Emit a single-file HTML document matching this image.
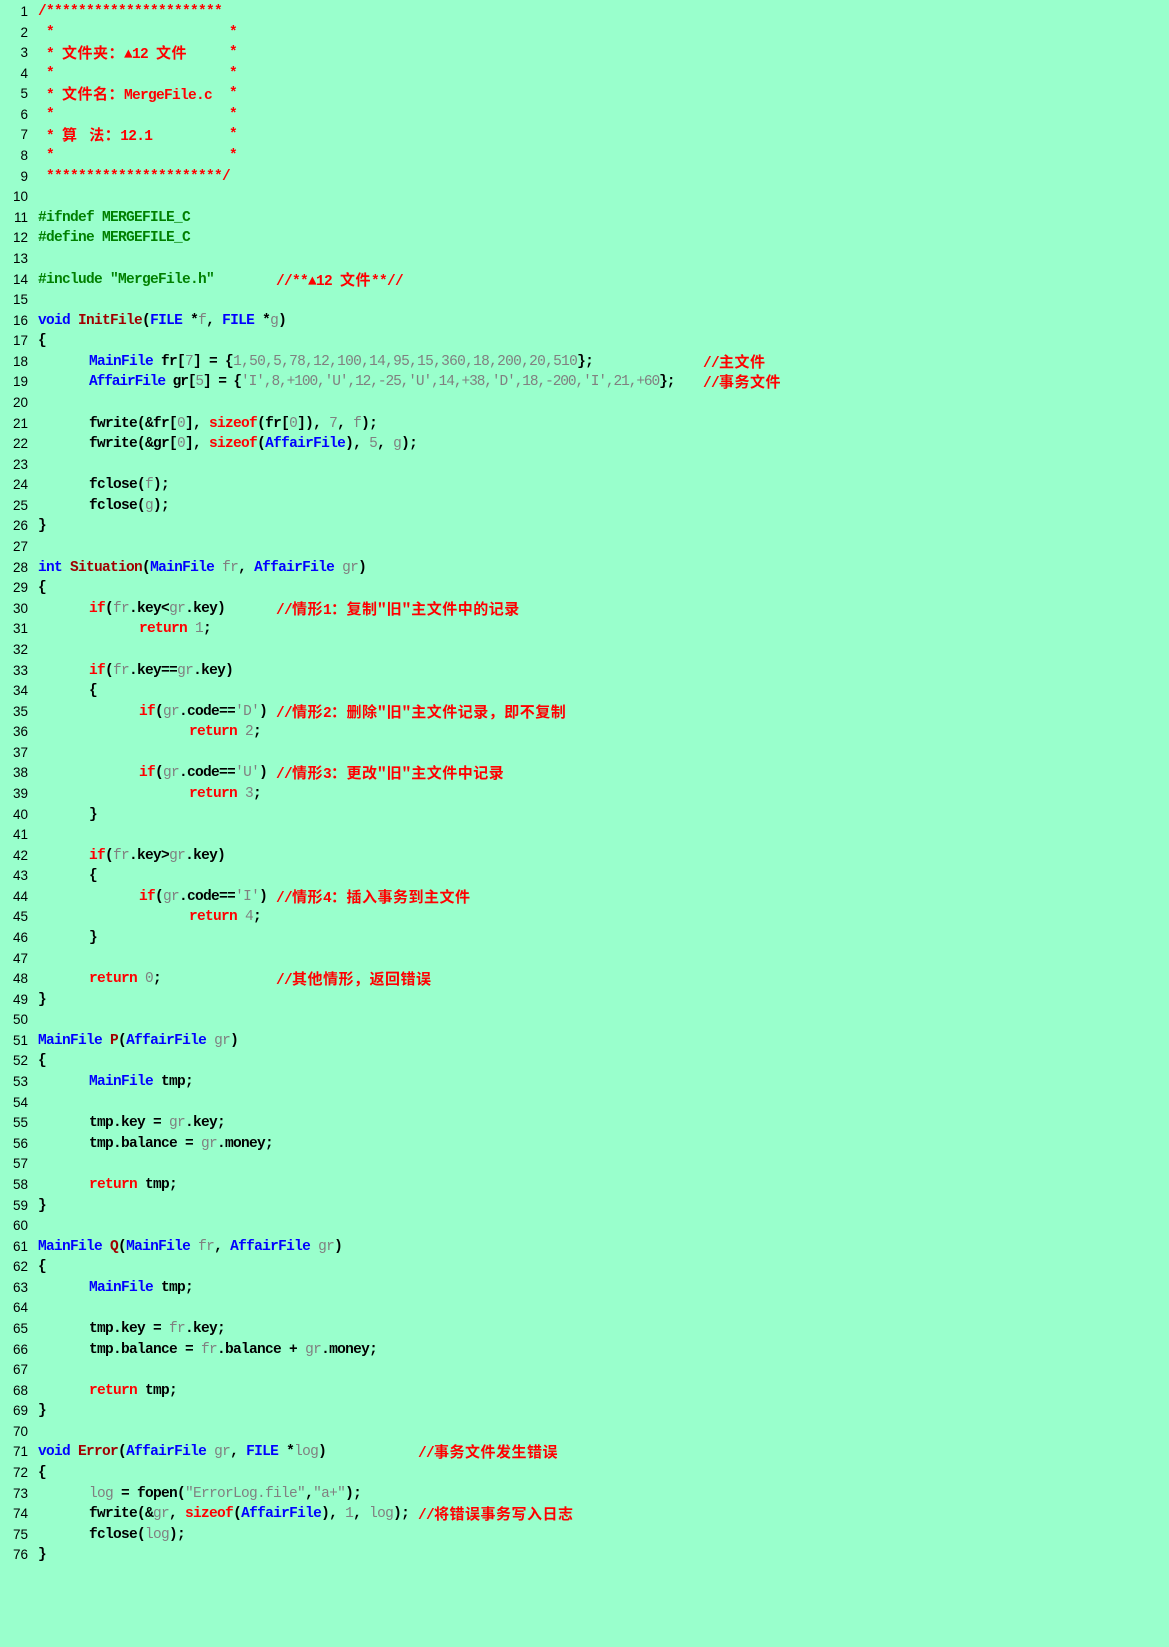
<!DOCTYPE html>
<html><head><meta charset="utf-8"><style>
html,body{margin:0;padding:0;background:#99ffcc;width:1169px;height:1647px;overflow:hidden}
#w{position:absolute;left:0;top:2px;width:1169px}
.l{position:relative;height:20.59px;line-height:20.59px;white-space:pre;font-family:"Liberation Mono","Noto Sans CJK SC",monospace;font-size:14.5px;letter-spacing:-0.7px;font-weight:bold;color:#000}
.n{position:absolute;left:0;width:28px;text-align:right;font-family:"Liberation Sans",sans-serif;font-weight:normal;font-size:13.5px;letter-spacing:0;color:#000}
.x{position:absolute;left:38px}
.i1{left:89px}.i2{left:139px}.i3{left:189px}
.c{position:absolute;color:#f00}
.r{color:#f00}.b{color:#0000ff}.f{color:#a00000}.g{color:#808080;font-weight:normal}.m{color:#008000}
.cj{font-family:"Noto Sans CJK SC",sans-serif;font-weight:bold;font-size:15px;letter-spacing:0.5px}
</style></head><body><div id="w">
<div class="l"><span class="n">1</span><span class="x r">/**********************</span></div>
<div class="l"><span class="n">2</span><span class="x r"> *</span><span class="c" style="left:229px">*</span></div>
<div class="l"><span class="n">3</span><span class="x r"> * <span class="cj">文件夹：</span>▲12 <span class="cj">文件</span></span><span class="c" style="left:229px">*</span></div>
<div class="l"><span class="n">4</span><span class="x r"> *</span><span class="c" style="left:229px">*</span></div>
<div class="l"><span class="n">5</span><span class="x r"> * <span class="cj">文件名：</span>MergeFile.c</span><span class="c" style="left:229px">*</span></div>
<div class="l"><span class="n">6</span><span class="x r"> *</span><span class="c" style="left:229px">*</span></div>
<div class="l"><span class="n">7</span><span class="x r"> * <span class="cj">算&nbsp;&nbsp;&nbsp;法：</span>12.1</span><span class="c" style="left:229px">*</span></div>
<div class="l"><span class="n">8</span><span class="x r"> *</span><span class="c" style="left:229px">*</span></div>
<div class="l"><span class="n">9</span><span class="x r"> **********************/</span></div>
<div class="l"><span class="n">10</span></div>
<div class="l"><span class="n">11</span><span class="x m">#ifndef MERGEFILE_C</span></div>
<div class="l"><span class="n">12</span><span class="x m">#define MERGEFILE_C</span></div>
<div class="l"><span class="n">13</span></div>
<div class="l"><span class="n">14</span><span class="x m">#include "MergeFile.h"</span><span class="c" style="left:276px">//**▲12 <span class="cj">文件</span>**//</span></div>
<div class="l"><span class="n">15</span></div>
<div class="l"><span class="n">16</span><span class="x"><span class="b">void</span> <span class="f">InitFile</span>(<span class="b">FILE</span> *<span class="g">f</span>, <span class="b">FILE</span> *<span class="g">g</span>)</span></div>
<div class="l"><span class="n">17</span><span class="x">{</span></div>
<div class="l"><span class="n">18</span><span class="x i1"><span class="b">MainFile</span> fr[<span class="g">7</span>] = {<span class="g">1,50,5,78,12,100,14,95,15,360,18,200,20,510</span>};</span><span class="c" style="left:703px">//<span class="cj">主文件</span></span></div>
<div class="l"><span class="n">19</span><span class="x i1" style="letter-spacing:-1.1px"><span class="b">AffairFile</span> gr[<span class="g">5</span>] = {<span class="g">'I',8,+100,'U',12,-25,'U',14,+38,'D',18,-200,'I',21,+60</span>};</span><span class="c" style="left:703px">//<span class="cj">事务文件</span></span></div>
<div class="l"><span class="n">20</span></div>
<div class="l"><span class="n">21</span><span class="x i1">fwrite(&amp;fr[<span class="g">0</span>], <span class="r">sizeof</span>(fr[<span class="g">0</span>]), <span class="g">7</span>, <span class="g">f</span>);</span></div>
<div class="l"><span class="n">22</span><span class="x i1">fwrite(&amp;gr[<span class="g">0</span>], <span class="r">sizeof</span>(<span class="b">AffairFile</span>), <span class="g">5</span>, <span class="g">g</span>);</span></div>
<div class="l"><span class="n">23</span></div>
<div class="l"><span class="n">24</span><span class="x i1">fclose(<span class="g">f</span>);</span></div>
<div class="l"><span class="n">25</span><span class="x i1">fclose(<span class="g">g</span>);</span></div>
<div class="l"><span class="n">26</span><span class="x">}</span></div>
<div class="l"><span class="n">27</span></div>
<div class="l"><span class="n">28</span><span class="x"><span class="b">int</span> <span class="f">Situation</span>(<span class="b">MainFile</span> <span class="g">fr</span>, <span class="b">AffairFile</span> <span class="g">gr</span>)</span></div>
<div class="l"><span class="n">29</span><span class="x">{</span></div>
<div class="l"><span class="n">30</span><span class="x i1"><span class="r">if</span>(<span class="g">fr</span>.key&lt;<span class="g">gr</span>.key)</span><span class="c" style="left:276px">//<span class="cj">情形</span>1<span class="cj">：复制"旧"主文件中的记录</span></span></div>
<div class="l"><span class="n">31</span><span class="x i2"><span class="r">return</span> <span class="g">1</span>;</span></div>
<div class="l"><span class="n">32</span></div>
<div class="l"><span class="n">33</span><span class="x i1"><span class="r">if</span>(<span class="g">fr</span>.key==<span class="g">gr</span>.key)</span></div>
<div class="l"><span class="n">34</span><span class="x i1">{</span></div>
<div class="l"><span class="n">35</span><span class="x i2"><span class="r">if</span>(<span class="g">gr</span>.code==<span class="g">'D'</span>)</span><span class="c" style="left:276px">//<span class="cj">情形</span>2<span class="cj">：删除"旧"主文件记录，即不复制</span></span></div>
<div class="l"><span class="n">36</span><span class="x i3"><span class="r">return</span> <span class="g">2</span>;</span></div>
<div class="l"><span class="n">37</span></div>
<div class="l"><span class="n">38</span><span class="x i2"><span class="r">if</span>(<span class="g">gr</span>.code==<span class="g">'U'</span>)</span><span class="c" style="left:276px">//<span class="cj">情形</span>3<span class="cj">：更改"旧"主文件中记录</span></span></div>
<div class="l"><span class="n">39</span><span class="x i3"><span class="r">return</span> <span class="g">3</span>;</span></div>
<div class="l"><span class="n">40</span><span class="x i1">}</span></div>
<div class="l"><span class="n">41</span></div>
<div class="l"><span class="n">42</span><span class="x i1"><span class="r">if</span>(<span class="g">fr</span>.key&gt;<span class="g">gr</span>.key)</span></div>
<div class="l"><span class="n">43</span><span class="x i1">{</span></div>
<div class="l"><span class="n">44</span><span class="x i2"><span class="r">if</span>(<span class="g">gr</span>.code==<span class="g">'I'</span>)</span><span class="c" style="left:276px">//<span class="cj">情形</span>4<span class="cj">：插入事务到主文件</span></span></div>
<div class="l"><span class="n">45</span><span class="x i3"><span class="r">return</span> <span class="g">4</span>;</span></div>
<div class="l"><span class="n">46</span><span class="x i1">}</span></div>
<div class="l"><span class="n">47</span></div>
<div class="l"><span class="n">48</span><span class="x i1"><span class="r">return</span> <span class="g">0</span>;</span><span class="c" style="left:276px">//<span class="cj">其他情形，返回错误</span></span></div>
<div class="l"><span class="n">49</span><span class="x">}</span></div>
<div class="l"><span class="n">50</span></div>
<div class="l"><span class="n">51</span><span class="x"><span class="b">MainFile</span> <span class="f">P</span>(<span class="b">AffairFile</span> <span class="g">gr</span>)</span></div>
<div class="l"><span class="n">52</span><span class="x">{</span></div>
<div class="l"><span class="n">53</span><span class="x i1"><span class="b">MainFile</span> tmp;</span></div>
<div class="l"><span class="n">54</span></div>
<div class="l"><span class="n">55</span><span class="x i1">tmp.key = <span class="g">gr</span>.key;</span></div>
<div class="l"><span class="n">56</span><span class="x i1">tmp.balance = <span class="g">gr</span>.money;</span></div>
<div class="l"><span class="n">57</span></div>
<div class="l"><span class="n">58</span><span class="x i1"><span class="r">return</span> tmp;</span></div>
<div class="l"><span class="n">59</span><span class="x">}</span></div>
<div class="l"><span class="n">60</span></div>
<div class="l"><span class="n">61</span><span class="x"><span class="b">MainFile</span> <span class="f">Q</span>(<span class="b">MainFile</span> <span class="g">fr</span>, <span class="b">AffairFile</span> <span class="g">gr</span>)</span></div>
<div class="l"><span class="n">62</span><span class="x">{</span></div>
<div class="l"><span class="n">63</span><span class="x i1"><span class="b">MainFile</span> tmp;</span></div>
<div class="l"><span class="n">64</span></div>
<div class="l"><span class="n">65</span><span class="x i1">tmp.key = <span class="g">fr</span>.key;</span></div>
<div class="l"><span class="n">66</span><span class="x i1">tmp.balance = <span class="g">fr</span>.balance + <span class="g">gr</span>.money;</span></div>
<div class="l"><span class="n">67</span></div>
<div class="l"><span class="n">68</span><span class="x i1"><span class="r">return</span> tmp;</span></div>
<div class="l"><span class="n">69</span><span class="x">}</span></div>
<div class="l"><span class="n">70</span></div>
<div class="l"><span class="n">71</span><span class="x"><span class="b">void</span> <span class="f">Error</span>(<span class="b">AffairFile</span> <span class="g">gr</span>, <span class="b">FILE</span> *<span class="g">log</span>)</span><span class="c" style="left:418px">//<span class="cj">事务文件发生错误</span></span></div>
<div class="l"><span class="n">72</span><span class="x">{</span></div>
<div class="l"><span class="n">73</span><span class="x i1"><span class="g">log</span> = fopen(<span class="g">"ErrorLog.file"</span>,<span class="g">"a+"</span>);</span></div>
<div class="l"><span class="n">74</span><span class="x i1">fwrite(&amp;<span class="g">gr</span>, <span class="r">sizeof</span>(<span class="b">AffairFile</span>), <span class="g">1</span>, <span class="g">log</span>);</span><span class="c" style="left:418px">//<span class="cj">将错误事务写入日志</span></span></div>
<div class="l"><span class="n">75</span><span class="x i1">fclose(<span class="g">log</span>);</span></div>
<div class="l"><span class="n">76</span><span class="x">}</span></div>
</div></body></html>
